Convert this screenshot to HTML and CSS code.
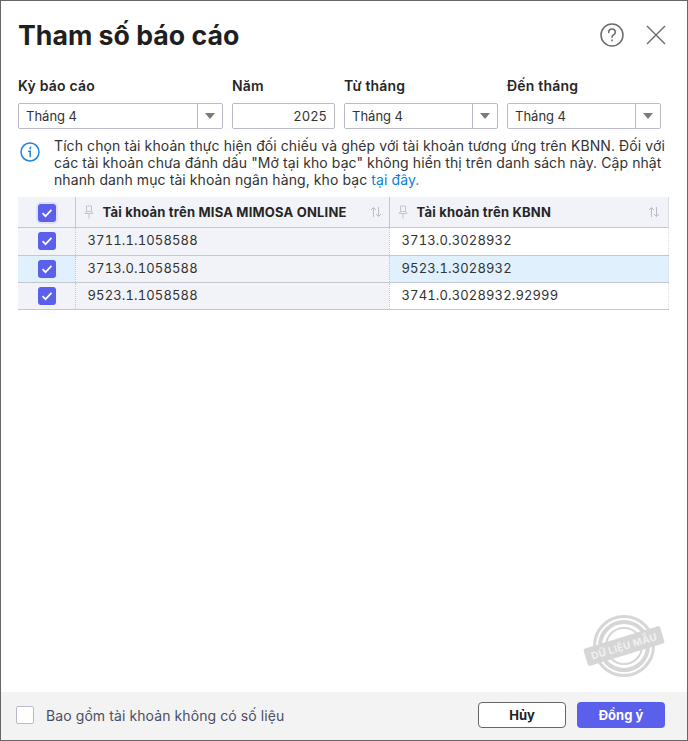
FILE: index.html
```html
<!DOCTYPE html>
<html lang="vi">
<head>
    <meta charset="UTF-8">
    <meta name="viewport" content="width=device-width, initial-scale=1.0">
    <title>Tham số báo cáo</title>
    <link rel="stylesheet" href="styles.css">
</head>
<body>
    <div class="dialog">
        <header class="dialog-header">
            <h1>Tham số báo cáo</h1>
            <div class="header-icons">
                <svg class="icon-help" width="24" height="24" viewBox="0 0 24 24" fill="none" stroke="#6b6b6b" stroke-width="1.5">
                    <circle cx="12" cy="12" r="11"/>
                    <path d="M8.7 9.4a3.3 3.3 0 0 1 6.6 0c0 2.2-3.3 2.4-3.3 4.9" stroke-linecap="round"/>
                    <path d="M12 16.6v1.7"/>
                </svg>
                <svg class="icon-close" width="20" height="20" viewBox="0 0 20 20" fill="none" stroke="#6b6b6b" stroke-width="1.4">
                    <path d="M1 1l18 18M19 1L1 19"/>
                </svg>
            </div>
        </header>

        <section class="filters">
            <div class="field">
                <label>Kỳ báo cáo</label>
                <div class="combo"><span class="combo-value">Tháng 4</span><span class="combo-btn"><i class="caret"></i></span></div>
            </div>
            <div class="field">
                <label>Năm</label>
                <div class="combo combo-number"><span class="combo-value">2025</span></div>
            </div>
            <div class="field">
                <label>Từ tháng</label>
                <div class="combo"><span class="combo-value">Tháng 4</span><span class="combo-btn"><i class="caret"></i></span></div>
            </div>
            <div class="field">
                <label>Đến tháng</label>
                <div class="combo"><span class="combo-value">Tháng 4</span><span class="combo-btn"><i class="caret"></i></span></div>
            </div>
        </section>

        <section class="notice">
            <svg class="icon-info" width="20" height="20" viewBox="0 0 20 20" fill="none" stroke="#1a86e0" stroke-width="1.5">
                <circle cx="10" cy="10" r="9"/>
                <path d="M8.6 9.2H10.2V14.6" stroke-linecap="round"/>
                <path d="M10.6 5.2l-.6 1.6" stroke-linecap="round"/>
            </svg>
            <p>Tích chọn tài khoản thực hiện đối chiếu và ghép với tài khoản tương ứng trên KBNN. Đối với các tài khoản chưa đánh dấu "Mở tại kho bạc" không hiển thị trên danh sách này. Cập nhật nhanh danh mục tài khoản ngân hàng, kho bạc <a href="#">tại đây.</a></p>
        </section>

        <table class="grid">
            <colgroup>
                <col class="col-check">
                <col class="col-misa">
                <col class="col-kbnn">
            </colgroup>
            <thead>
                <tr>
                    <th class="cell-check"><span class="check check-focus"><svg width="12" height="10" viewBox="0 0 12 10" fill="none" stroke="#fff" stroke-width="1.7"><path d="M1.5 5.2l3 3 6-6.4"/></svg></span></th>
                    <th>
                        <div class="th-inner">
                            <svg class="icon-pin" width="10" height="14" viewBox="0 0 10 14" fill="none" stroke="#c2c5cc" stroke-width="1"><path d="M2.5 1h5v5.5h-5zM1 8.5h8L7.5 6.5h-5zM5 8.5V13.5"/></svg>
                            <span class="th-title">Tài khoản trên MISA MIMOSA ONLINE</span>
                            <svg class="icon-sort" width="12" height="12" viewBox="0 0 12 12" fill="none" stroke="#b9bcc4" stroke-width="1"><path d="M3.5 11V1.5M1 4l2.5-2.5L6 4M8.5 1v9.5M6 8l2.5 2.5L11 8"/></svg>
                        </div>
                    </th>
                    <th>
                        <div class="th-inner">
                            <svg class="icon-pin" width="10" height="14" viewBox="0 0 10 14" fill="none" stroke="#c2c5cc" stroke-width="1"><path d="M2.5 1h5v5.5h-5zM1 8.5h8L7.5 6.5h-5zM5 8.5V13.5"/></svg>
                            <span class="th-title">Tài khoản trên KBNN</span>
                            <svg class="icon-sort" width="12" height="12" viewBox="0 0 12 12" fill="none" stroke="#b9bcc4" stroke-width="1"><path d="M3.5 11V1.5M1 4l2.5-2.5L6 4M8.5 1v9.5M6 8l2.5 2.5L11 8"/></svg>
                        </div>
                    </th>
                </tr>
            </thead>
            <tbody>
                <tr>
                    <td class="cell-check"><span class="check"><svg width="12" height="10" viewBox="0 0 12 10" fill="none" stroke="#fff" stroke-width="1.7"><path d="M1.5 5.2l3 3 6-6.4"/></svg></span></td>
                    <td class="cell-pinned">3711.1.1058588</td>
                    <td>3713.0.3028932</td>
                </tr>
                <tr class="row-selected">
                    <td class="cell-check"><span class="check"><svg width="12" height="10" viewBox="0 0 12 10" fill="none" stroke="#fff" stroke-width="1.7"><path d="M1.5 5.2l3 3 6-6.4"/></svg></span></td>
                    <td class="cell-pinned">3713.0.1058588</td>
                    <td>9523.1.3028932</td>
                </tr>
                <tr>
                    <td class="cell-check"><span class="check"><svg width="12" height="10" viewBox="0 0 12 10" fill="none" stroke="#fff" stroke-width="1.7"><path d="M1.5 5.2l3 3 6-6.4"/></svg></span></td>
                    <td class="cell-pinned">9523.1.1058588</td>
                    <td>3741.0.3028932.92999</td>
                </tr>
            </tbody>
        </table>

        <svg class="watermark" width="88" height="80" viewBox="0 0 88 80" fill="none" stroke="#d6d6d6">
            <circle cx="41" cy="40" r="29.5" stroke-width="3"/>
            <circle cx="41" cy="40" r="24" stroke-width="4"/>
            <circle cx="41" cy="40" r="18" stroke-width="2"/>
            <g transform="rotate(-17 41 40)">
                <rect x="1" y="31" width="80" height="18" rx="2" fill="#d6d6d6" stroke="none"/>
                <text x="41" y="44" text-anchor="middle" class="watermark-text">DỮ LIỆU MẪU</text>
            </g>
        </svg>

        <footer class="dialog-footer">
            <label class="include"><span class="check-empty"></span>Bao gồm tài khoản không có số liệu</label>
            <div class="footer-actions">
                <button class="btn btn-cancel" type="button">Hủy</button>
                <button class="btn btn-ok" type="button">Đồng ý</button>
            </div>
        </footer>
    </div>
</body>
</html>
```

FILE: styles.css
```css
/* Estilos generales */
* {
    box-sizing: border-box;
}

html, body {
    margin: 0;
    padding: 0;
}

body {
    font-family: 'Inter', 'Liberation Sans', sans-serif;
    font-size: 14px;
    letter-spacing: 0.09px;
    color: #212121;
    background-color: #ffffff;
}

.dialog {
    position: relative;
    width: 688px;
    height: 741px;
    border: 1px solid #666666;
    display: flex;
    flex-direction: column;
    background-color: #ffffff;
}

/* Cabecera */
.dialog-header {
    display: flex;
    justify-content: space-between;
    align-items: center;
    height: 34px;
    margin-top: 17px;
    padding: 0 21px 0 17px;
}

.dialog-header h1 {
    margin: 0;
    font-size: 26.7px;
    font-weight: 700;
    line-height: 34px;
    letter-spacing: 0;
    color: #1f1f1f;
}

.header-icons {
    display: flex;
    align-items: center;
    gap: 22px;
}

/* Filtros */
.filters {
    display: grid;
    grid-template-columns: 205px 103px 154px 154px;
    column-gap: 9px;
    padding: 0 17px;
    margin-top: 25px;
}

.field label {
    display: block;
    font-weight: 600;
    line-height: 17px;
    margin-bottom: 9px;
    letter-spacing: 0.2px;
    color: #262626;
}

.combo {
    display: flex;
    height: 26px;
    border: 1px solid #babac8;
    border-radius: 2px;
    background-color: #ffffff;
    line-height: 24px;
    font-size: 13px;
    font-variant-numeric: tabular-nums;
    letter-spacing: 0;
    color: #333333;
}

.combo-value {
    flex: 1;
    padding-left: 7px;
}

.combo-number .combo-value {
    padding: 0 7px 0 0;
    text-align: right;
}

.combo-btn {
    width: 25px;
    border-left: 1px solid #babac8;
    display: flex;
    align-items: center;
    justify-content: center;
}

.caret {
    display: block;
    width: 0;
    height: 0;
    border-left: 5px solid transparent;
    border-right: 5px solid transparent;
    border-top: 6px solid #7a7a7a;
}

/* Aviso */
.notice {
    display: flex;
    margin-top: 8px;
    padding: 0 17px 0 19px;
}

.icon-info {
    flex: none;
    margin-top: 5px;
}

.notice p {
    margin: 0 0 0 14px;
    font-size: 14px;
    line-height: 17px;
    color: #333333;
}

.notice a {
    color: #0a7fd6;
    text-decoration: none;
}

/* Tabla */
.grid {
    width: 651px;
    margin: 9px 0 0 17px;
    border-collapse: collapse;
    table-layout: fixed;
    font-size: 13px;
}

.col-check {
    width: 57px;
}

.col-misa {
    width: 314px;
}

.grid th {
    height: 30px;
    padding: 0;
    background-color: #f2f3f8;
    border-bottom: 1px solid #c5c7d0;
    border-right: 1px solid #c5c7d0;
    font-size: 13px;
    font-weight: 700;
    letter-spacing: 0.2px;
    text-align: left;
    color: #262626;
}

.grid th:last-child {
    border-right: 1px solid #dcdde3;
}

.th-inner {
    display: flex;
    align-items: center;
    padding: 0 7px 0 8px;
}

.grid th:last-child .th-inner {
    padding-right: 8px;
}

.th-title {
    flex: 1;
    margin-left: 9px;
}

.grid td {
    height: 27px;
    padding: 0 0 2px 12px;
    border-bottom: 1px solid #c5c7d0;
    border-right: 1px dotted #c5c7d0;
    font-variant-numeric: tabular-nums;
    letter-spacing: 0.15px;
    color: #333333;
}

.grid tbody tr:first-child td {
    height: 28px;
}

.grid td:last-child {
    border-right: 1px dotted #dcdde3;
}

.grid td.cell-check {
    padding: 0 0 0 2px;
    text-align: center;
}

.grid th.cell-check {
    padding: 2px 0 0 2px;
    text-align: center;
}

.grid td.cell-pinned {
    background-color: #f2f3f8;
}

.grid td.cell-check {
    background-color: #f2f3f8;
}

.row-selected td,
.grid .row-selected td.cell-check {
    background-color: #e0f0fd;
}

.check {
    display: inline-flex;
    align-items: center;
    justify-content: center;
    width: 18px;
    height: 18px;
    border-radius: 3px;
    background-color: #5a5fec;
    vertical-align: middle;
}

.check-focus {
    box-shadow: 0 0 0 2px #dfe0fb;
}

/* Marca de agua */
.watermark {
    position: absolute;
    left: 582px;
    top: 605px;
}

.watermark-text {
    font-family: 'Inter', 'Liberation Sans', sans-serif;
    font-size: 10px;
    font-weight: 700;
    fill: #f0f0f0;
    stroke: none;
    letter-spacing: 0.3px;
}

/* Pie */
.dialog-footer {
    display: flex;
    align-items: center;
    justify-content: space-between;
    height: 48px;
    margin-top: auto;
    padding: 0 22px 2px 15px;
    background-color: #f3f3f3;
}

.include {
    display: flex;
    align-items: center;
    font-size: 14px;
    color: #4a4f63;
}

.check-empty {
    width: 18px;
    height: 18px;
    margin-right: 12px;
    border: 1px solid #b9bace;
    border-radius: 2px;
    background-color: #ffffff;
}

.footer-actions {
    display: flex;
    gap: 11px;
}

.btn {
    width: 88px;
    height: 26px;
    padding: 0;
    border-radius: 4px;
    font-family: inherit;
    font-size: 13px;
    font-weight: 700;
    cursor: pointer;
}

.btn-cancel {
    border: 1px solid #666666;
    background-color: #ffffff;
    color: #212121;
}

.btn-ok {
    border: none;
    background-color: #5a5fec;
    color: #ffffff;
}
```
